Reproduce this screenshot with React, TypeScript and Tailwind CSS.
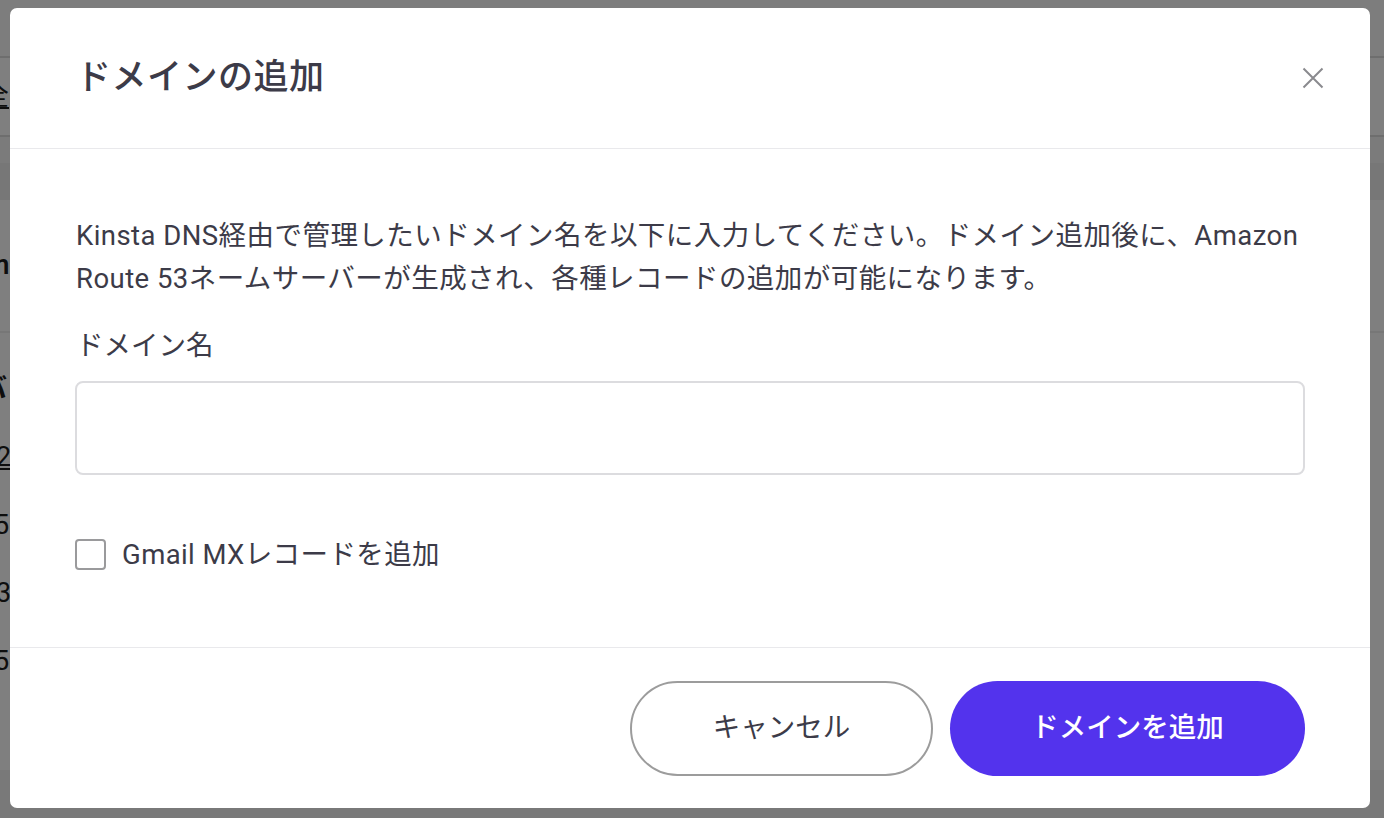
import React from "react";

const font = { fontFamily: 'Roboto, "Noto Sans CJK JP", sans-serif' };

const BackgroundPage = () => (
  <div className="flex flex-col w-full h-full bg-white text-[#1c1c1c] text-[27px]">
    <div className="h-[58px] border-b-2 border-[#dcdcdc] bg-[#fafafa]" />
    <div className="h-[79px] border-b-2 border-[#dcdcdc] flex items-center">
      <span className="-ml-[18px] underline">全</span>
    </div>
    <div className="h-[26px] bg-[#f7f7f7]" />
    <div className="h-[37px] bg-[#efefef]" />
    <div className="h-[133px] border-b-2 border-[#efefef] flex items-center">
      <span className="-ml-[14px] font-semibold">m</span>
    </div>
    <div className="flex flex-col pt-[36px] gap-[28px] leading-[40px]">
      <span className="-ml-[20px] font-semibold">バ</span>
      <span className="-ml-[4px] underline">2.</span>
      <span className="-ml-[6px]">5</span>
      <span className="-ml-[4px]">3.</span>
      <span className="-ml-[6px]">5</span>
    </div>
    <div className="flex-1" />
    <div className="h-[48px] bg-[#f3f3f3]" />
  </div>
);

export default function App() {
  return (
    <div className="relative w-full h-[818px] overflow-hidden" style={font}>
      <BackgroundPage />
      <div className="absolute inset-0 bg-black/50 pl-[10px] pt-[8px]">
        <div className="w-[1360px] h-[800px] bg-white rounded-[7px] flex flex-col text-[#3c3b48]">
          <div className="h-[141px] shrink-0 flex items-center justify-between pl-[66px] pr-[46px] border-b border-[#e9e9ec]">
            <h2 className="text-[35px] font-medium tracking-[0.5px]">ドメインの追加</h2>
            <svg width="22" height="22" viewBox="0 0 22 22" className="text-[#8a8a8e]">
              <path d="M1.5 1.5 20.5 20.5M20.5 1.5 1.5 20.5" stroke="currentColor" strokeWidth="2" fill="none" />
            </svg>
          </div>
          <div className="flex-1 flex flex-col px-[65px] pt-[65px] text-[27.5px]">
            <p className="leading-[43px] pl-[1px] tracking-[0.45px]">
              Kinsta DNS経由で管理したいドメイン名を以下に入力してください。ドメイン追加後に、Amazon
              Route 53ネームサーバーが生成され、各種レコードの追加が可能になります。
            </p>
            <label className="mt-[24px] leading-[43px] pl-[1px]">ドメイン名</label>
            <div className="mt-[14px] h-[94px] rounded-[8px] border-2 border-[#dcdcdf]" />
            <div className="mt-[58px] flex items-center gap-[16px]">
              <span className="w-[31px] h-[31px] rounded-[4px] border-2 border-[#9a9a9c]" />
              <span className="leading-[43px] tracking-[0.4px]">Gmail MXレコードを追加</span>
            </div>
          </div>
          <div className="h-[161px] shrink-0 border-t border-[#e9e9ec] flex items-center justify-end gap-[17px] pr-[65px]">
            <button className="w-[303px] h-[95px] rounded-full border-2 border-[#9c9c9c] text-[27.5px] text-[#3c3b48] bg-white">
              キャンセル
            </button>
            <button className="w-[355px] h-[95px] rounded-full bg-[#5333ed] text-white text-[27.5px] font-medium">
              ドメインを追加
            </button>
          </div>
        </div>
      </div>
    </div>
  );
}
